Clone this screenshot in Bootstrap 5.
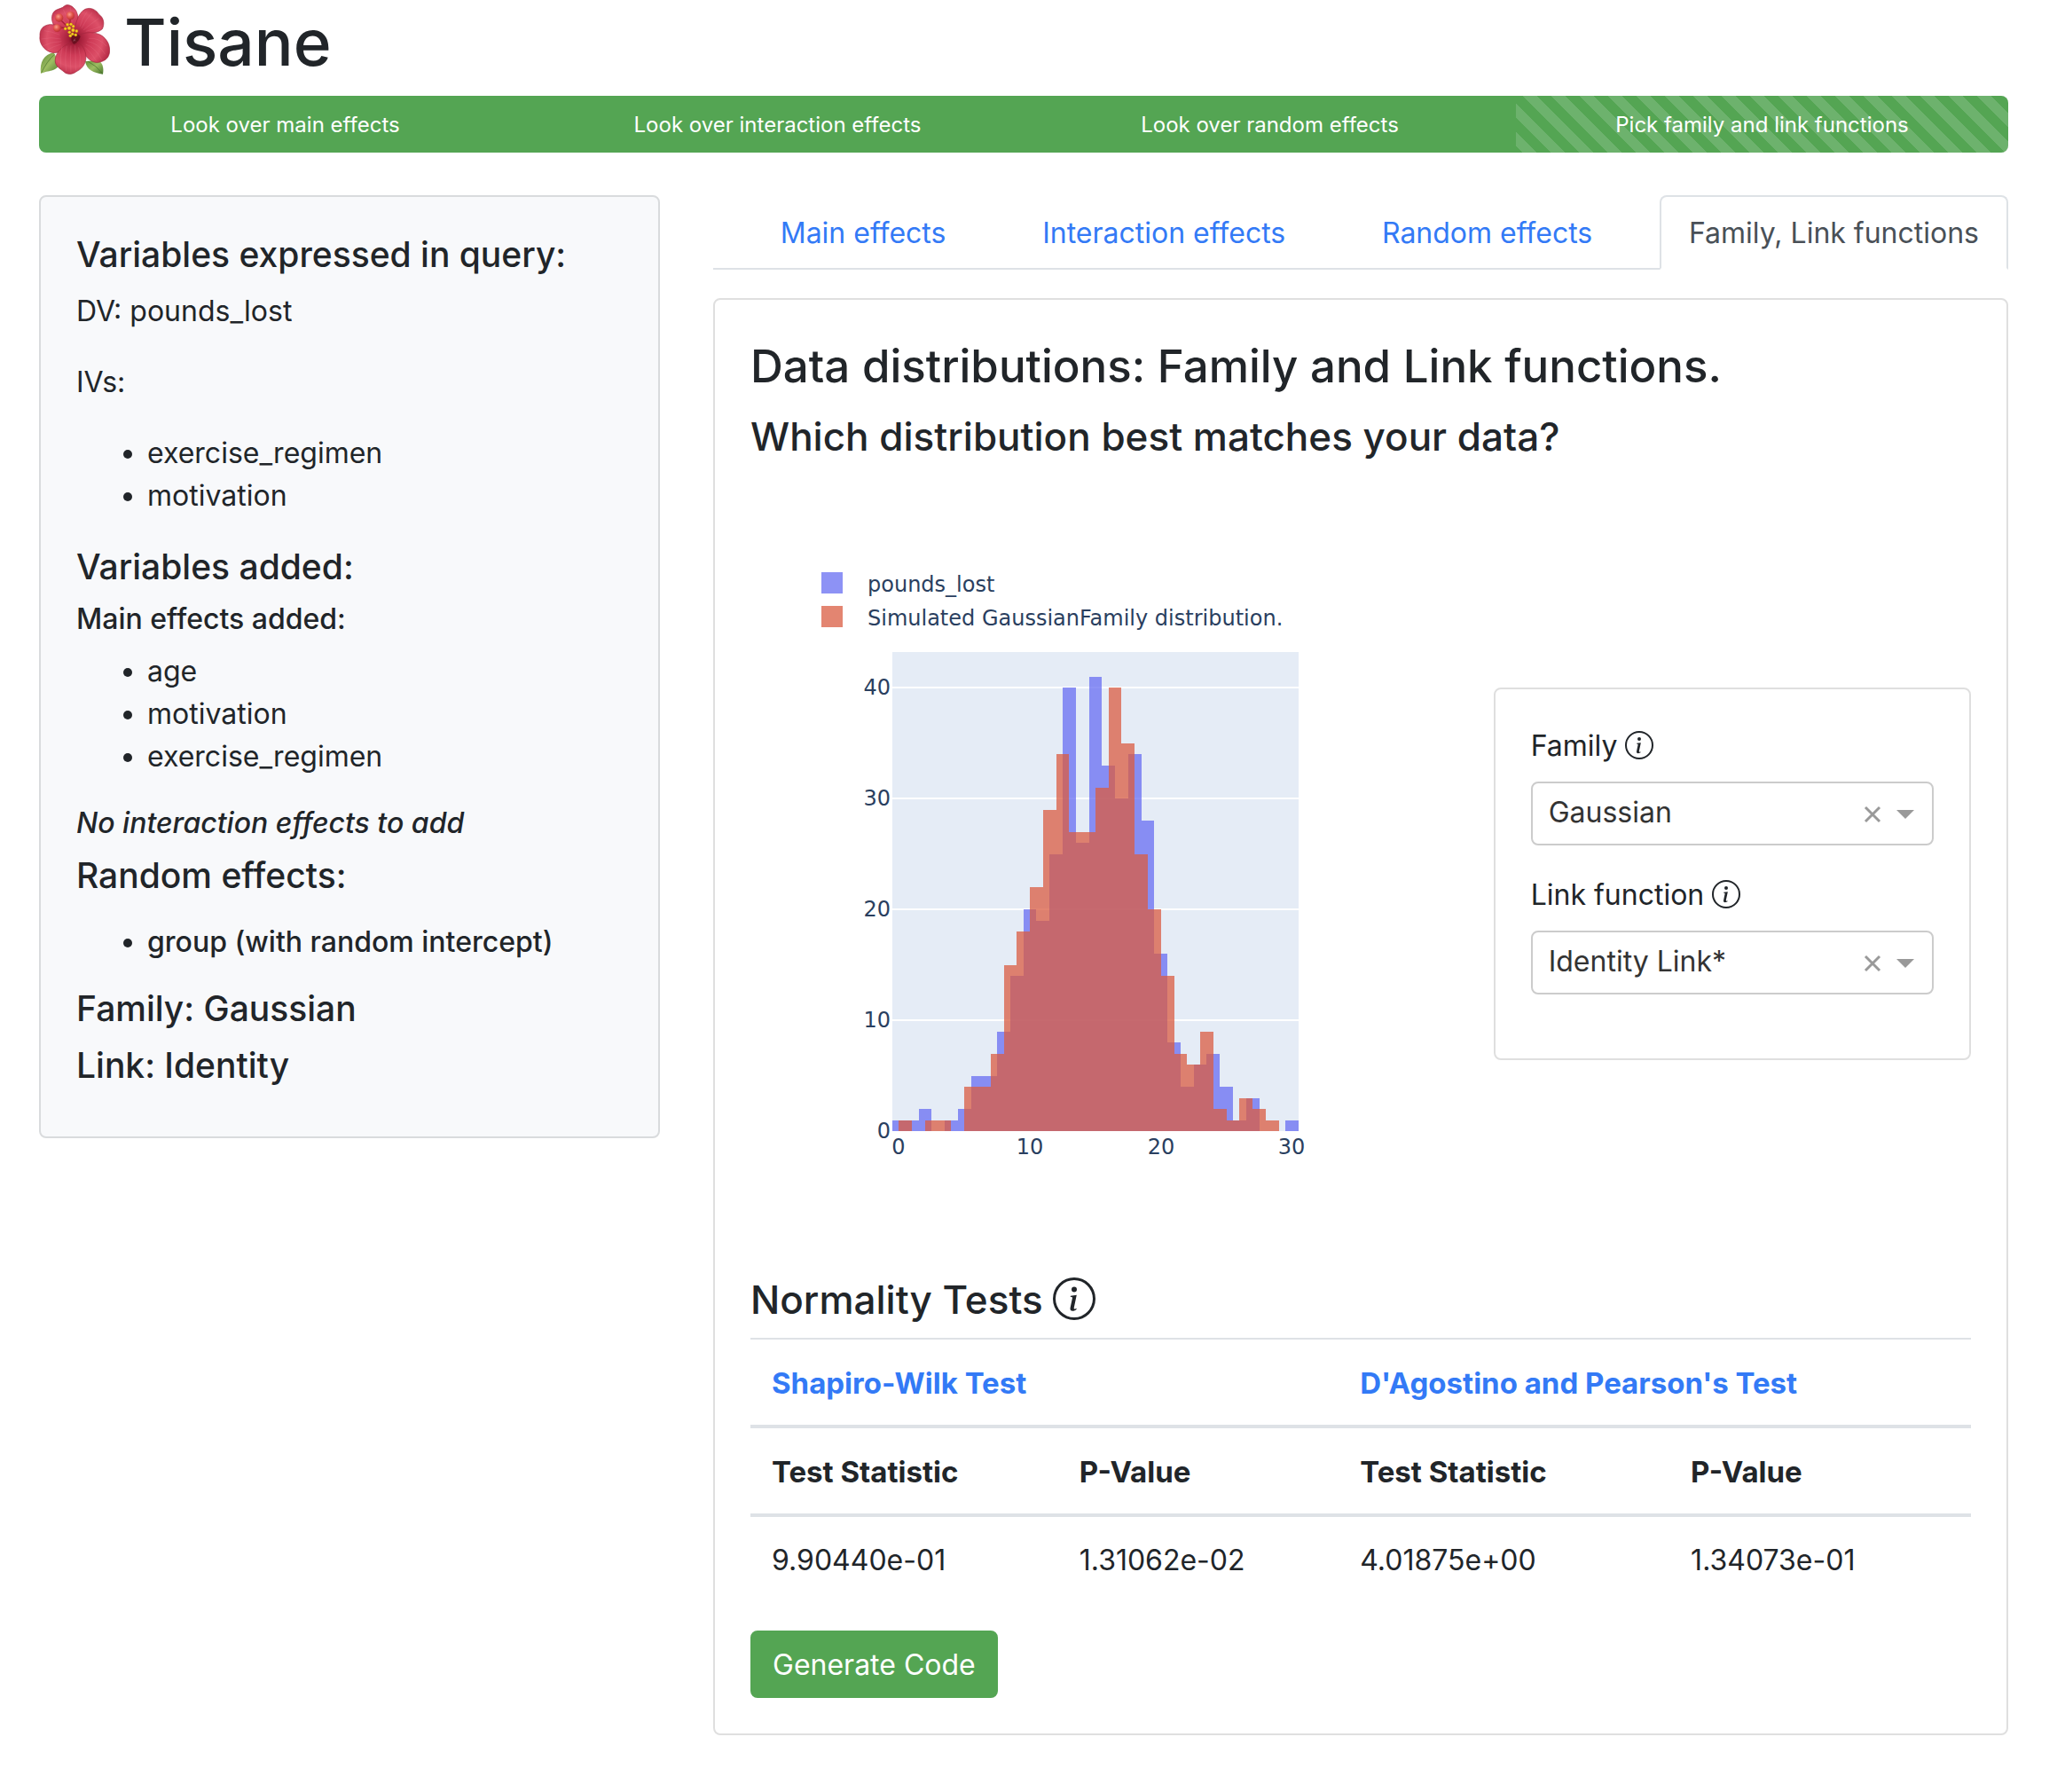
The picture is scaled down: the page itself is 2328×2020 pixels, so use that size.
<!DOCTYPE html>
<html lang="en">
<head>
<meta charset="utf-8">
<meta name="viewport" content="width=device-width, initial-scale=1">
<title>Tisane</title>
<link href="https://cdn.jsdelivr.net/npm/bootstrap@5.3.0/dist/css/bootstrap.min.css" rel="stylesheet">
<style>
  :root {
    --bs-border-width: 2px;
    --bs-border-radius: 8px;
    --tis-green: #54a553;
    --tis-blue: #337af6;
    --tis-line: #dee2e6;
    font-size: 32px;
  }
  body { font-family: Inter, "Liberation Sans", sans-serif; font-size: 32px; line-height: 48px; color: #212529; background: #fff; }
  h1, h2, h3, h4, h5, h6 { font-weight: 500; margin-bottom: 16px; }
  .page-shell { padding: 0 64px 0 44px; }
  .page-title { font-size: 73px; line-height: 96px; margin-bottom: 12px; gap: 16px; }
  .title-flower { width: 80px; height: 96px; flex: none; }
  .panel-title { font-size: 51px; line-height: 66px; padding-top: 2px; }
  .section-title { font-size: 44px; line-height: 54px; padding-top: 3px; }
  .side-title { font-size: 39px; line-height: 48px; }
  .side-subtitle, .side-sublist { font-size: 32px; line-height: 38px; }
  .info-mark { width: 1em; height: 1em; vertical-align: -4px; fill: currentColor; }
  .section-title .info-mark { width: 48px; height: 48px; vertical-align: -7px; }

  .steps { --bs-progress-height: 64px; --bs-progress-font-size: 24px; --bs-progress-border-radius: 8px; height: 64px; margin-bottom: 48px; }
  .steps .progress-bar { background-color: var(--tis-green); padding-top: 2px; }
  .steps .progress-bar-striped { background-size: 32px 32px; background-position: 7px 0; }

  .main-row, .inner-row { --bs-gutter-x: 60px; }
  .panel { border: 2px solid #dfdfdf; border-radius: 8px; --bs-card-spacer-x: 40px; --bs-card-spacer-y: 40px; }
  .panel-side { background: #f8f9fb; border-color: #d9dbdd; }
  .panel-side .card-body { padding-top: 41px; padding-bottom: 40px; }
  .panel ul { padding-left: 80px; margin-bottom: 32px; }

  .nav-tabs { border-bottom: 2px solid var(--tis-line); margin-bottom: 32px; }
  .nav-tabs .nav-link { border: 2px solid transparent; border-radius: 8px 8px 0 0; padding: 17px 31px 15px; margin-bottom: -2px; color: var(--tis-blue); text-align: center; }
  .nav-tabs .nav-link.active { color: #495057; border-color: var(--tis-line) var(--tis-line) #fff; background: #fff; }

  .chart { display: block; width: 760px; max-width: 100%; height: auto; }
  .chart text { font-family: "DejaVu Sans", Verdana, sans-serif; font-size: 24px; fill: #2a3f5f; }

  .picker .form-select { height: 72px; padding: 0 120px 3px 18px; border: 2px solid #ccc; border-radius: 8px; background-image: none; color: #333; font-size: 32px; line-height: 48px; }
  .picker-tools { top: 0; bottom: 0; right: 22px; gap: 16px; pointer-events: none; }
  .picker-clear { width: 22px; height: 22px; padding: 0; border: 0; background: none; pointer-events: auto; line-height: 0; }

  .tests { table-layout: fixed; margin-bottom: 32px; color: inherit; --bs-table-bg: transparent; }
  .tests > :not(caption) > * > * { padding: 25px 24px 23px; line-height: 48px; border-bottom: 4px solid var(--tis-line); white-space: nowrap; }
  .tests > thead > tr > th { font-size: 33px; }
  .tests > thead > tr:first-child > th { border-top: 2px solid var(--tis-line); }
  .tests > tbody > tr > td { border-bottom: 0; }
  .tests a { color: var(--tis-blue); text-decoration: none; }
  .btn-code { --bs-btn-color: #fff; --bs-btn-bg: var(--tis-green); --bs-btn-border-color: var(--tis-green); --bs-btn-hover-color: #fff; --bs-btn-hover-bg: #468e45; --bs-btn-hover-border-color: #468e45; padding: 13px 23px 11px; border-width: 2px; border-radius: 8px; font-size: 32px; line-height: 48px; }
</style>
<script src="https://cdn.jsdelivr.net/npm/bootstrap@5.3.0/dist/js/bootstrap.bundle.min.js" defer></script>
</head>
<body>
<svg width="0" height="0" class="position-absolute" aria-hidden="true">
  <symbol id="info" viewBox="0 0 16 16">
    <path d="M8 15A7 7 0 1 1 8 1a7 7 0 0 1 0 14zm0 1A8 8 0 1 0 8 0a8 8 0 0 0 0 16z"/>
    <path d="m8.93 6.588-2.29.287-.082.38.45.083c.294.07.352.176.288.469l-.738 3.468c-.194.897.105 1.319.808 1.319.545 0 1.178-.252 1.465-.598l.088-.416c-.2.176-.492.246-.686.246-.275 0-.375-.193-.304-.533L8.93 6.588zM9 4.5a1 1 0 1 1-2 0 1 1 0 0 1 2 0z"/>
  </symbol>
</svg>

<div class="container-fluid page-shell">
  <h1 class="page-title d-flex align-items-center">
    <svg class="title-flower" viewBox="42 0 240 288" aria-hidden="true">
      <defs>
        <radialGradient id="petal" gradientUnits="userSpaceOnUse" cx="162" cy="132" r="125">
          <stop offset="0" stop-color="#6d0f20"/><stop offset=".16" stop-color="#a41f3a"/><stop offset=".45" stop-color="#cf3b57"/><stop offset=".75" stop-color="#dd5068"/><stop offset="1" stop-color="#b82d48"/>
        </radialGradient>
        <linearGradient id="leaf" x1="0" y1="0" x2="1" y2="1"><stop offset="0" stop-color="#5f8a38"/><stop offset=".5" stop-color="#9dbd62"/><stop offset="1" stop-color="#47752b"/></linearGradient>
        <radialGradient id="ball" cx=".4" cy=".35" r=".7"><stop offset="0" stop-color="#f8a08c"/><stop offset=".5" stop-color="#e2554b"/><stop offset="1" stop-color="#b32a30"/></radialGradient>
      </defs>
      <path fill="url(#leaf)" d="M48 249C44 210 58 184 92 178L112 215C100 244 74 236 48 249Z"/>
      <path fill="url(#leaf)" d="M258 251C262 226 256 210 240 203L198 208C204 238 226 246 258 251Z"/>
      <path d="M50 246Q68 208 94 184M256 248Q236 222 208 208" fill="none" stroke="#47702b" stroke-width="2"/>
      <g fill="url(#petal)" stroke="#a3263d" stroke-width="2">
        <path d="M160 132C110 120 78 82 87 50C94 28 116 32 126 22C138 10 158 20 168 38C182 70 178 104 160 132Z"/>
        <path d="M160 132C160 92 172 44 198 31C218 22 238 36 244 48C262 60 264 82 256 98C236 116 196 112 160 132Z"/>
        <path d="M160 132C150 164 112 182 86 178C56 170 42 144 45 122C44 100 54 86 78 83C112 82 150 98 160 132Z"/>
        <path d="M164 134C176 108 222 104 250 118C274 132 284 156 280 180C276 200 262 206 248 210C226 216 206 200 194 180Z"/>
        <path d="M164 138C122 152 94 178 97 210C100 228 120 236 130 246C144 254 158 250 168 242C192 232 204 208 200 184C196 162 184 146 164 138Z"/>
      </g>
      <g fill="none" stroke="#f0899a" stroke-opacity=".3" stroke-width="2">
        <path d="M120 158Q112 190 116 228M136 156Q128 194 134 240M150 154Q146 200 150 246M164 154Q166 196 166 238M176 160Q184 190 180 226"/>
        <path d="M204 140Q242 144 266 184M200 150Q232 160 254 202M210 130Q244 126 270 156M198 160Q218 178 236 206"/>
        <path d="M186 96Q202 62 222 42M192 102Q218 80 244 62M180 90Q190 58 204 40M200 106Q228 100 254 88"/>
        <path d="M118 140Q84 140 54 156M116 132Q84 124 50 132M116 150Q92 156 68 170M112 118Q84 106 60 104"/>
        <path d="M132 78Q108 54 96 50M140 70Q130 44 124 32M154 76Q152 44 148 24"/>
      </g>
      <path fill="#5a0b18" fill-opacity=".7" d="M154 112Q176 112 182 124Q176 142 160 150Q146 138 154 112Z"/>
      <path d="M110 62L134 86M148 54L146 88M104 95L136 94" fill="none" stroke="#a81e35" stroke-width="4"/>
      <g fill="url(#ball)"><circle cx="110" cy="60" r="14"/><circle cx="148" cy="53" r="14"/><circle cx="103" cy="95" r="13"/></g>
      <g fill="#f6d021" stroke="#a56b12" stroke-width="1">
        <circle cx="138" cy="83" r="5"/><circle cx="150" cy="82" r="5"/><circle cx="158" cy="89" r="5"/><circle cx="131" cy="97" r="5"/><circle cx="144" cy="95" r="6"/><circle cx="157" cy="102" r="6"/><circle cx="169" cy="105" r="5"/><circle cx="145" cy="109" r="5"/><circle cx="155" cy="115" r="5"/><circle cx="166" cy="118" r="5"/><circle cx="148" cy="121" r="5"/>
      </g>
    </svg>
    <span>Tisane</span>
  </h1>

  <div class="progress steps">
    <div class="progress-bar w-25" role="progressbar" aria-valuenow="25" aria-valuemin="0" aria-valuemax="100">Look over main effects</div>
    <div class="progress-bar w-25" role="progressbar" aria-valuenow="25" aria-valuemin="0" aria-valuemax="100">Look over interaction effects</div>
    <div class="progress-bar w-25" role="progressbar" aria-valuenow="25" aria-valuemin="0" aria-valuemax="100">Look over random effects</div>
    <div class="progress-bar progress-bar-striped w-25" role="progressbar" aria-valuenow="25" aria-valuemin="0" aria-valuemax="100">Pick family and link functions</div>
  </div>

  <div class="row main-row align-items-start">
    <div class="col-4">
      <aside class="card panel panel-side">
        <div class="card-body">
          <h5 class="side-title">Variables expressed in query:</h5>
          <p class="mb-3">DV: pounds_lost</p>
          <p class="mb-3">IVs:</p>
          <ul>
            <li>exercise_regimen</li>
            <li>motivation</li>
          </ul>
          <h5 class="side-title">Variables added:</h5>
          <h6 class="side-subtitle">Main effects added:</h6>
          <ul>
            <li>age</li>
            <li>motivation</li>
            <li>exercise_regimen</li>
          </ul>
          <h6 class="side-subtitle fst-italic">No interaction effects to add</h6>
          <h5 class="side-title mb-3">Random effects:</h5>
          <ul class="side-sublist">
            <li><h6 class="side-subtitle mb-0">group (with random intercept)</h6></li>
          </ul>
          <h5 class="side-title">Family: Gaussian</h5>
          <h5 class="side-title">Link: Identity</h5>
        </div>
      </aside>
    </div>

    <div class="col-8">
      <ul class="nav nav-tabs flex-nowrap">
        <li class="nav-item flex-grow-1"><a class="nav-link" href="#main">Main effects</a></li>
        <li class="nav-item"><a class="nav-link" href="#interaction">Interaction effects</a></li>
        <li class="nav-item flex-grow-1"><a class="nav-link" href="#random">Random effects</a></li>
        <li class="nav-item"><a class="nav-link active" aria-current="page" href="#family-link">Family, Link functions</a></li>
      </ul>

      <main class="card panel">
        <div class="card-body">
          <h3 class="panel-title">Data distributions: Family and Link functions.</h3>
          <h4 class="section-title">Which distribution best matches your data?</h4>

          <div class="row inner-row align-items-center">
            <div class="col-7">
              <svg class="chart" viewBox="0 0 760 900" role="img" aria-label="Histogram of pounds_lost and the simulated distribution">
                <rect x="80" y="110" width="24" height="24" fill="#676df1" fill-opacity=".75"/>
                <rect x="80" y="148" width="24" height="24" fill="#d95c41" fill-opacity=".75"/>
                <text x="132" y="132">pounds_lost</text>
                <text x="132" y="170">Simulated GaussianFamily distribution.</text>
                <rect x="160" y="200" width="458" height="540" fill="#e5ecf6"/>
                <path d="M160 240H618M160 365H618M160 490H618M160 615H618" stroke="#fff" stroke-width="2"/>
                <!-- step outlines in data units: one bin wide, one count high -->
                <g transform="translate(167.4 740) scale(14.77 -12.5)" fill-opacity=".75" shape-rendering="crispEdges">
                  <path fill="#676df1" d="M-.5 0V1h1V1h1V2h1V0h1V1h1V2h1V5h1V5h1V9h1V14h1V20h1V19h1V25h1V40h1V26h1V41h1V33h1V30h1V34h1V28h1V16h1V8h1V4h1V6h1V7h1V4h1V1h1V3h1V0h1V0h1V1h1V0Z"/>
                  <path fill="#d95c41" d="M0 0V1h1V0h1V1h1V1h1V0h1V4h1V4h1V7h1V15h1V18h1V22h1V29h1V34h1V27h1V27h1V31h1V40h1V35h1V25h1V20h1V14h1V7h1V6h1V9h1V2h1V1h1V3h1V2h1V1h1V0Z"/>
                </g>
                <g text-anchor="end">
                  <text x="158" y="248">40</text><text x="158" y="373">30</text><text x="158" y="498">20</text><text x="158" y="623">10</text><text x="158" y="748">0</text>
                </g>
                <g text-anchor="middle">
                  <text x="167" y="766">0</text><text x="315" y="766">10</text><text x="463" y="766">20</text><text x="610" y="766">30</text>
                </g>
              </svg>
            </div>
            <div class="col-5">
              <div class="card panel">
                <div class="card-body">
                  <div class="mb-3">
                    <label class="d-block mb-2" for="family">Family <svg class="info-mark"><use href="#info"/></svg></label>
                    <div class="picker position-relative">
                      <select class="form-select" id="family"><option>Gaussian</option><option>Inverse Gaussian</option><option>Gamma</option></select>
                      <div class="picker-tools position-absolute d-flex align-items-center">
                        <button class="picker-clear" type="button" aria-label="Clear family"><svg width="22" height="22" viewBox="0 0 22 22" stroke="#999" stroke-width="3"><path d="M3 4 19 20M19 4 3 20"/></svg></button>
                        <svg width="20" height="12" viewBox="0 0 20 12" fill="#999"><path d="M0 2H20L10 12Z"/></svg>
                      </div>
                    </div>
                  </div>
                  <div class="mb-3">
                    <label class="d-block mb-2" for="link">Link function <svg class="info-mark"><use href="#info"/></svg></label>
                    <div class="picker position-relative">
                      <select class="form-select" id="link"><option>Identity Link*</option><option>Log Link</option></select>
                      <div class="picker-tools position-absolute d-flex align-items-center">
                        <button class="picker-clear" type="button" aria-label="Clear link function"><svg width="22" height="22" viewBox="0 0 22 22" stroke="#999" stroke-width="3"><path d="M3 4 19 20M19 4 3 20"/></svg></button>
                        <svg width="20" height="12" viewBox="0 0 20 12" fill="#999"><path d="M0 2H20L10 12Z"/></svg>
                      </div>
                    </div>
                  </div>
                </div>
              </div>
            </div>
          </div>

          <h4 class="section-title">Normality Tests <svg class="info-mark"><use href="#info"/></svg></h4>
          <table class="table tests">
            <colgroup><col style="width:25.2%"><col style="width:23%"><col style="width:27.1%"><col style="width:24.7%"></colgroup>
            <thead>
              <tr><th colspan="2" scope="colgroup"><a href="#shapiro">Shapiro-Wilk Test</a></th><th colspan="2" scope="colgroup"><a href="#dagostino">D'Agostino and Pearson's Test</a></th></tr>
              <tr><th scope="col">Test Statistic</th><th scope="col">P-Value</th><th scope="col">Test Statistic</th><th scope="col">P-Value</th></tr>
            </thead>
            <tbody>
              <tr><td>9.90440e-01</td><td>1.31062e-02</td><td>4.01875e+00</td><td>1.34073e-01</td></tr>
            </tbody>
          </table>
          <button class="btn btn-code" type="button">Generate Code</button>
        </div>
      </main>
    </div>
  </div>
</div>
</body>
</html>
